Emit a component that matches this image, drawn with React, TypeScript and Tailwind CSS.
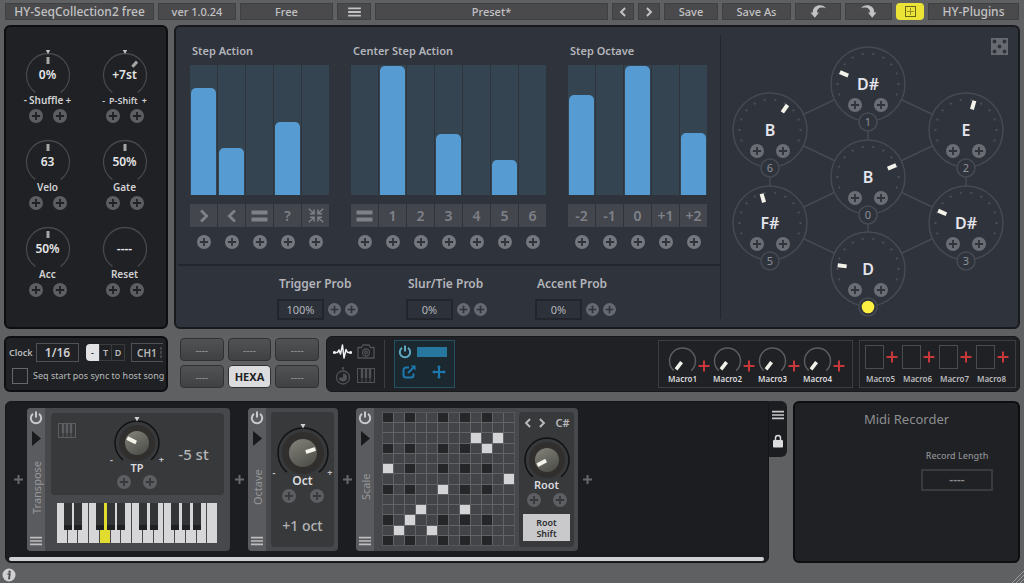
import { useState } from "react";
import type { ReactNode } from "react";

const polar = (cx: number, cy: number, r: number, deg: number) => {
  const a = (deg * Math.PI) / 180;
  return [cx + r * Math.sin(a), cy - r * Math.cos(a)];
};

const arc = (cx: number, cy: number, r: number, half: number) => {
  const [x1, y1] = polar(cx, cy, r, -half);
  const [x2, y2] = polar(cx, cy, r, half);
  return `M${x1} ${y1}A${r} ${r} 0 1 1 ${x2} ${y2}`;
};

/* ---------- small icons ---------- */

function PlusDot({ label, className = "text-[#5c5e61]", size = 14 }: { label: string; className?: string; size?: number }) {
  return (
    <button type="button" aria-label={label} className={`block shrink-0 ${className}`}>
      <svg width={size} height={size} viewBox="0 0 14 14" className="block">
        <path
          fill="currentColor"
          fillRule="evenodd"
          d="M7 0a7 7 0 1 1 0 14a7 7 0 0 1 0-14zM6.1 2.9v3.2H2.9v1.8h3.2v3.2h1.8V7.9h3.2V6.1H7.9V2.9z"
        />
      </svg>
    </button>
  );
}

function DotPair({ name, gap = "gap-[10px]", tone }: { name: string; gap?: string; tone?: string }) {
  return (
    <div className={`flex justify-center ${gap}`}>
      <PlusDot label={`${name} mod A`} className={tone} />
      <PlusDot label={`${name} mod B`} className={tone} />
    </div>
  );
}

function Cross({ className }: { className: string }) {
  return (
    <svg width="12" height="12" viewBox="0 0 12 12" className={className}>
      <path d="M6 0.5v11M0.5 6h11" stroke="currentColor" strokeWidth="2" />
    </svg>
  );
}

function MoveCross({ className }: { className: string }) {
  return (
    <svg width="14" height="14" viewBox="0 0 14 14" className={className}>
      <path d="M7 1.5v11M1.5 7h11" stroke="currentColor" strokeWidth="2" />
      <path d="M7 0l2 2.6H5zM7 14l2-2.6H5zM0 7l2.6-2v4zM14 7l-2.6-2v4z" fill="currentColor" />
    </svg>
  );
}

function Bars({ className = "", w = 14, h = 11 }: { className?: string; w?: number; h?: number }) {
  return (
    <svg width={w} height={h} viewBox="0 0 14 11" className={className}>
      <path d="M0 1.5h14M0 5.5h14M0 9.5h14" stroke="currentColor" strokeWidth="2" />
    </svg>
  );
}

function Power({ className }: { className: string }) {
  return (
    <svg width="14" height="14" viewBox="0 0 14 14" className={className}>
      <path d="M4 2.9a5.2 5.2 0 1 0 6 0M7 0.6v6" fill="none" stroke="currentColor" strokeWidth="2" />
    </svg>
  );
}

function Angle({ dir, className, size = 12 }: { dir: "left" | "right"; className?: string; size?: number }) {
  return (
    <svg width={size} height={size} viewBox="0 0 12 12" className={className}>
      <path d={dir === "left" ? "M8.5 1.2L3.7 6l4.8 4.8" : "M3.5 1.2L8.3 6l-4.8 4.8"} fill="none" stroke="currentColor" strokeWidth="2.4" />
    </svg>
  );
}

function PianoIcon({ className }: { className: string }) {
  return (
    <svg width="18" height="15" viewBox="0 0 18 15" className={className}>
      <rect x="0.5" y="0.5" width="17" height="14" fill="none" stroke="currentColor" />
      <path d="M5 0v10M9 0v10M13 0v10" stroke="currentColor" strokeWidth="2.4" />
      <path d="M5 10v5M9 10v5M13 10v5" stroke="currentColor" />
    </svg>
  );
}

function Undo({ flip = false }: { flip?: boolean }) {
  return (
    <svg width="17" height="13" viewBox="0 0 17 13" className="text-[#c2c2c4]">
      <path
        fill="currentColor"
        transform={flip ? "translate(17 0) scale(-1 1)" : undefined}
        d="M16.2 3.6C14.500 0.800 10.500 -0.400 7.200 0.800C3.900 2 2.700 4.600 2.800 7.400L0.500 7.400L4.800 12.800L9 7.400L7 7.400C6.900 4.200 9.500 2 12.800 2.500C14 2.600 15.200 2.900 16.200 3.600z"
      />
    </svg>
  );
}

/* ---------- top bar ---------- */

function TopButton({ w, label, children }: { w: string; label?: string; children: ReactNode }) {
  return (
    <button
      type="button"
      aria-label={label}
      className={`flex h-[17px] items-center justify-center whitespace-nowrap border border-[#3f4042] bg-[#4a4a4c] font-medium leading-none text-[#c2c2c4] ${w}`}
    >
      {children}
    </button>
  );
}

function TopBar() {
  return (
    <header className="flex gap-1 px-[5px] pt-[3px] text-[11px]">
      <TopButton w="w-[149px] text-[12px]">HY-SeqCollection2 free</TopButton>
      <TopButton w="w-[78px]">ver 1.0.24</TopButton>
      <TopButton w="w-[93px]">Free</TopButton>
      <TopButton w="w-[34px]" label="Menu">
        <Bars w={13} h={10} />
      </TopButton>
      <TopButton w="min-w-0 flex-1">Preset*</TopButton>
      <TopButton w="w-[22px]" label="Previous preset">
        <Angle dir="left" size={10} />
      </TopButton>
      <TopButton w="w-[22px]" label="Next preset">
        <Angle dir="right" size={10} />
      </TopButton>
      <TopButton w="w-[54px]">Save</TopButton>
      <TopButton w="w-[69px]">Save As</TopButton>
      <TopButton w="w-[46px]" label="Undo">
        <Undo />
      </TopButton>
      <TopButton w="w-[47px]" label="Redo">
        <Undo flip />
      </TopButton>
      <button type="button" aria-label="Grid view" className="flex h-[17px] w-[28px] items-center justify-center rounded-sm bg-[#ebe437]">
        <svg width="11" height="11" viewBox="0 0 11 11">
          <rect x="0.5" y="0.5" width="10" height="10" fill="none" stroke="#68651b" />
          <path d="M5.500 2v7M2 5.500h7" stroke="#97922a" />
        </svg>
      </button>
      <TopButton w="w-[91px] text-[12px]">HY-Plugins</TopButton>
    </header>
  );
}

/* ---------- left panel ---------- */

type RingKnobProps = { name: string; value: string; angle?: number; bipolar?: boolean; small?: boolean };

function RingKnob({ name, value, angle, bipolar, small }: RingKnobProps) {
  return (
    <div className="flex flex-col items-center">
      <div className="relative">
        <svg width="50" height="44" viewBox="0 0 50 44" className="block">
          <path d={arc(25, 26, 21.5, 144)} fill="none" stroke="#46484b" strokeWidth="1.3" />
          {bipolar && <path d="M22.800 1h4.400l-2.200 4z" fill="#c4c4c4" />}
          {angle !== undefined && (
            <rect x="23.500" y="8" width="3" height="7" fill="#a5a5a3" transform={`rotate(${angle} 25 26)`} />
          )}
        </svg>
        <span className="absolute inset-x-0 top-[18px] text-center text-[12px] font-semibold leading-4 text-[#e6e6e8]">{value}</span>
        <input
          type="range"
          aria-label={name}
          min={-144}
          max={144}
          defaultValue={angle ?? 0}
          className="absolute inset-0 h-full w-full cursor-pointer opacity-0"
        />
      </div>
      <div
        className={`flex h-[14px] items-center font-semibold leading-none text-[#d2d2d4] ${small ? "gap-1 text-[9px]" : "gap-[2px] text-[10px]"}`}
      >
        {bipolar && <span>-</span>}
        <span>{name}</span>
        {bipolar && <span>+</span>}
      </div>
      <div className="mt-[2px]">
        <DotPair name={name} />
      </div>
    </div>
  );
}

function GlobalPanel() {
  return (
    <section className="w-[164px] shrink-0 rounded-md border-2 border-[#0d0e10] bg-[#1f2124] px-[3px] pb-[30px] pt-[22px]">
      <div className="grid grid-cols-2 gap-y-[13px]">
        <RingKnob name="Shuffle" value="0%" angle={0} bipolar />
        <RingKnob name="P-Shift" value="+7st" angle={42} bipolar small />
        <RingKnob name="Velo" value="63" angle={0} />
        <RingKnob name="Gate" value="50%" angle={0} />
        <RingKnob name="Acc" value="50%" angle={0} />
        <RingKnob name="Reset" value="----" />
      </div>
    </section>
  );
}

/* ---------- step charts ---------- */

type Column = { key: string; face: ReactNode; value: number };

const EqualsIcon = (
  <svg width="17" height="12" viewBox="0 0 17 12">
    <path d="M0.500 2.500h16M0.500 9.500h16" stroke="currentColor" strokeWidth="4" />
  </svg>
);

const ShrinkIcon = (
  <svg width="16" height="15" viewBox="0 0 16 15" fill="none" stroke="currentColor" strokeWidth="1.500">
    <path d="M0.800 0.800L5.500 5.200M2 5.700h4V1.500M15.200 0.800L10.500 5.200M14 5.700h-4V1.500M0.800 14.200L5.500 9.800M2 9.300h4v4.200M15.200 14.200L10.500 9.800M14 9.300h-4v4.200" />
  </svg>
);

function Bar({ name, initial }: { name: string; initial: number }) {
  const [value, setValue] = useState(initial);
  return (
    <div className="relative flex h-[130px] w-[27px] items-end bg-[#344450] px-px">
      <div className="w-full rounded-t-[5px] bg-[#569bd1]" style={{ height: `${value}%` }} />
      <input
        type="range"
        aria-label={name}
        value={value}
        onChange={(e) => setValue(Number(e.target.value))}
        className="absolute inset-0 h-full w-full cursor-pointer opacity-0 [direction:rtl] [writing-mode:vertical-lr]"
      />
    </div>
  );
}

function StepChart({ title, columns }: { title: string; columns: Column[] }) {
  return (
    <div>
      <h2 className="h-4 pl-[2px] text-[11px] font-semibold leading-4 text-[#b3b5ba]">{title}</h2>
      <div className="mt-[6px] flex">
        {columns.map((c) => (
          <div key={c.key} className="mr-px flex flex-col items-center last:mr-0">
            <Bar name={`${title} ${c.key}`} initial={c.value} />
            <button
              type="button"
              aria-label={c.key}
              className="mt-[9px] flex h-[23px] w-[27px] items-center justify-center bg-[#43464d] text-[14px] font-semibold leading-none text-[#7e8188]"
            >
              {c.face}
            </button>
            <div className="mt-2">
              <PlusDot label={`Modulate ${c.key}`} className="text-[#74777d]" />
            </div>
          </div>
        ))}
      </div>
    </div>
  );
}

const stepAction: Column[] = [
  { key: "forward", face: <Angle dir="right" size={14} />, value: 82 },
  { key: "backward", face: <Angle dir="left" size={14} />, value: 36 },
  { key: "hold", face: EqualsIcon, value: 0 },
  { key: "random", face: "?", value: 56 },
  { key: "center", face: ShrinkIcon, value: 0 },
];

const centerAction: Column[] = [
  { key: "hold", face: EqualsIcon, value: 0 },
  { key: "1", face: "1", value: 99 },
  { key: "2", face: "2", value: 0 },
  { key: "3", face: "3", value: 47 },
  { key: "4", face: "4", value: 0 },
  { key: "5", face: "5", value: 27 },
  { key: "6", face: "6", value: 0 },
];

const stepOctave: Column[] = [
  { key: "-2", face: "-2", value: 77 },
  { key: "-1", face: "-1", value: 0 },
  { key: "0", face: "0", value: 99 },
  { key: "+1", face: "+1", value: 0 },
  { key: "+2", face: "+2", value: 48 },
];

function Prob({ id, title, value }: { id: string; title: string; value: string }) {
  return (
    <div className="w-[82px] whitespace-nowrap">
      <label htmlFor={id} className="block h-4 pl-[2px] text-[12px] font-semibold leading-4 text-[#b3b5ba]">
        {title}
      </label>
      <div className="mt-[7px] flex items-center gap-1">
        <input
          id={id}
          defaultValue={value}
          className="h-[21px] w-[47px] border-2 border-[#22252c] bg-[#2d3139] text-center text-[11px] text-[#b3b5ba]"
        />
        <PlusDot label={`${title} mod A`} className="text-[#666970]" size={13} />
        <PlusDot label={`${title} mod B`} className="text-[#666970]" size={13} />
      </div>
    </div>
  );
}

/* ---------- hexagon sequencer ---------- */

type HexNode = { id: string; note: string; angle: number; place: string; active?: boolean };

const hexNodes: HexNode[] = [
  { id: "1", note: "D#", angle: -67, place: "left-[109px] top-[19px]" },
  { id: "6", note: "B", angle: 35, place: "left-[11px] top-[65px]" },
  { id: "2", note: "E", angle: 16, place: "left-[207px] top-[65px]" },
  { id: "0", note: "B", angle: 67, place: "left-[109px] top-[112px]" },
  { id: "5", note: "F#", angle: -16, place: "left-[11px] top-[158px]" },
  { id: "3", note: "D#", angle: -66, place: "left-[207px] top-[158px]" },
  { id: "4", note: "D", angle: -83, place: "left-[109px] top-[204px]", active: true },
];

function HexKnob({ node }: { node: HexNode }) {
  const ticks = Array.from({ length: 12 }, (_, i) => -110 + i * 20);
  return (
    <div className={`absolute h-[88px] w-[76px] ${node.place}`}>
      <svg width="76" height="88" viewBox="0 0 76 88" className="absolute left-0 top-0">
        <circle cx="38" cy="38" r="37" fill="#2f333c" stroke="#464a52" strokeWidth="1.500" />
        {ticks.map((t) => (
          <rect key={t} x="37" y="6.500" width="2" height="2" fill="#4b4f58" transform={`rotate(${t} 38 38)`} />
        ))}
        <rect x="36" y="7.500" width="4" height="9" fill="#f3f3ea" transform={`rotate(${node.angle} 38 38)`} />
        <circle cx="38" cy="76" r="9" fill="#2f333c" stroke="#464a52" strokeWidth="1.500" />
        {node.active && <circle cx="38" cy="76" r="6.300" fill="#fdf043" />}
      </svg>
      <span className="absolute inset-x-0 top-[27px] text-center text-[16px] font-semibold leading-[22px] text-[#e4e4ec]">{node.note}</span>
      {!node.active && (
        <span className="absolute inset-x-0 top-[69px] text-center text-[11px] leading-[14px] text-[#8d9097]">{node.id}</span>
      )}
      <input
        type="range"
        aria-label={`Node ${node.id} note`}
        min={-120}
        max={120}
        defaultValue={node.angle}
        className="absolute left-0 top-0 h-[76px] w-full cursor-pointer opacity-0"
      />
      <div className="absolute inset-x-0 top-[52px]">
        <DotPair name={`Node ${node.id}`} gap="gap-3" tone="text-[#6a6d74]" />
      </div>
    </div>
  );
}

function HexPanel() {
  return (
    <div className="relative my-2 flex-1 border-l border-[#23262c]">
      <div className="relative -my-2 h-[298px] w-[297px]">
        <svg width="297" height="298" viewBox="0 0 297 298" className="absolute left-0 top-0">
          <path
            d="M147 57L245 103V196L147 242L49 196V103zM147 57V242M49 103L245 196M245 103L49 196"
            fill="none"
            stroke="#464a52"
            strokeWidth="1.500"
          />
        </svg>
        {hexNodes.map((n) => (
          <HexKnob key={n.id} node={n} />
        ))}
      </div>
      <button type="button" aria-label="Randomize" className="absolute right-[10px] top-[3px]">
        <svg width="17" height="17" viewBox="0 0 17 17" className="block">
          <rect width="17" height="17" fill="#676a70" />
          <g fill="#2f333c">
            <circle cx="3.500" cy="3.500" r="1.900" />
            <circle cx="13.500" cy="3.500" r="1.900" />
            <circle cx="8.500" cy="8.500" r="1.900" />
            <circle cx="3.500" cy="13.500" r="1.900" />
            <circle cx="13.500" cy="13.500" r="1.900" />
          </g>
        </svg>
      </button>
    </div>
  );
}

function SequencerPanel() {
  return (
    <section className="flex min-w-0 flex-1 rounded-md border-2 border-[#181a1e] bg-[#2f333c]">
      <div className="w-[544px] shrink-0">
        <div className="flex gap-[22px] pl-[14px] pt-4">
          <StepChart title="Step Action" columns={stepAction} />
          <StepChart title="Center Step Action" columns={centerAction} />
          <StepChart title="Step Octave" columns={stepOctave} />
        </div>
        <div className="ml-[2px] mt-[15px] h-[2px] bg-[#23262c]" />
        <div className="mt-[10px] flex gap-[47px] pl-[101px]">
          <Prob id="trigger" title="Trigger Prob" value="100%" />
          <Prob id="slur" title="Slur/Tie Prob" value="0%" />
          <Prob id="accent" title="Accent Prob" value="0%" />
        </div>
      </div>
      <HexPanel />
    </section>
  );
}

/* ---------- middle row ---------- */

function ClockPanel() {
  return (
    <section className="flex w-[164px] shrink-0 flex-col gap-[6px] rounded-md border-2 border-[#0d0e10] bg-[#1f2124] pl-[3px] pt-[5px] text-[10px] text-[#b9b9bb]">
      <div className="flex items-center">
        <label htmlFor="clock" className="w-[27px] text-[9px] font-semibold">
          Clock
        </label>
        <select
          id="clock"
          className="h-[19px] w-[43px] appearance-none border border-[#4f5154] bg-transparent text-center text-[12px] font-semibold leading-none text-[#cfcfd1]"
        >
          <option>1/16</option>
        </select>
        <div className="ml-[7px] flex h-[17px] text-[9px] font-semibold leading-none">
          <button type="button" className="w-[13px] rounded-l-sm bg-[#e2e2e4] text-[#333]">
            -
          </button>
          <button type="button" className="w-[13px] border border-[#3a3b3e]">
            T
          </button>
          <button type="button" className="w-[13px] border border-l-0 border-[#3a3b3e]">
            D
          </button>
        </div>
        <div className="relative ml-[6px]">
          <select
            aria-label="MIDI channel"
            className="block h-[19px] w-[32px] appearance-none border border-r-0 border-[#4f5154] bg-transparent pl-[5px] text-[10px] font-semibold leading-none"
          >
            <option>CH1</option>
          </select>
          <svg width="2" height="11" viewBox="0 0 2 11" className="absolute right-[1px] top-1">
            <path d="M1 0v3M1 4v3M1 8v3" stroke="#66686b" />
          </svg>
        </div>
      </div>
      <label className="flex items-center gap-[5px] whitespace-nowrap pl-[3px] text-[9px]">
        <input type="checkbox" className="h-4 w-4 appearance-none border border-[#66686b] checked:bg-[#b9b9bb]" />
        Seq start pos sync to host song
      </label>
    </section>
  );
}

function Pads() {
  const pads = ["----", "----", "----", "----", "HEXA", "----"];
  return (
    <div className="ml-3 mt-[2px] grid w-[139px] shrink-0 grid-cols-3 gap-1 self-start">
      {pads.map((p, i) => (
        <button
          key={i}
          type="button"
          className={
            p === "HEXA"
              ? "h-[23px] rounded-sm border border-[#303133] bg-[#dcdcde] text-[11px] font-bold leading-none text-[#222]"
              : "h-[23px] rounded-sm border border-[#303133] bg-linear-to-b from-[#515254] to-[#404143] text-[10px] leading-none text-[#97989a]"
          }
        >
          {p}
        </button>
      ))}
    </div>
  );
}

function ModTabs() {
  return (
    <div className="grid w-[58px] grid-cols-2 place-items-center border-r border-[#3b3d40] pl-1 pr-[6px]">
      <button type="button" aria-label="Modulation">
        <svg width="19" height="16" viewBox="0 0 19 16" fill="none" stroke="#efeff1" strokeWidth="1.500" strokeLinejoin="round">
          <path d="M1 8.500h3.500l1.500-2.500 1.500 4L9.500 1l1.500 13 2-8.500 1.500 3H18" />
          <circle cx="1.400" cy="8.500" r="0.800" />
          <circle cx="17.600" cy="8.500" r="0.800" />
        </svg>
      </button>
      <button type="button" aria-label="Snapshots">
        <svg width="18" height="15" viewBox="0 0 18 15" fill="none" stroke="#505255" strokeWidth="1.300">
          <path d="M1 3.500h3.500L6 1h6l1.500 2.500H17V14H1z" />
          <circle cx="9" cy="8.500" r="3.500" />
          <circle cx="9" cy="8.500" r="1.300" />
        </svg>
      </button>
      <button type="button" aria-label="Timing">
        <svg width="16" height="18" viewBox="0 0 16 18" fill="none" stroke="#505255" strokeWidth="1.300">
          <circle cx="8" cy="10.500" r="6.500" />
          <circle cx="8" cy="10.500" r="4" fill="#505255" stroke="none" />
          <path d="M8 10.500V6H3.500v4.500z" fill="#1f2124" stroke="none" />
          <path d="M7 1h2M8 1v2" />
        </svg>
      </button>
      <button type="button" aria-label="Keyboard">
        <PianoIcon className="block text-[#505255]" />
      </button>
    </div>
  );
}

function MacroKnob({ name }: { name: string }) {
  return (
    <div className="w-[45px]">
      <div className="flex items-end">
        <div className="relative ml-[9px]">
          <svg width="29" height="28" viewBox="0 0 29 28" className="block">
            <path d={arc(14.5, 15, 13, 138)} fill="none" stroke="#5a5c5f" strokeWidth="1.500" />
            <rect x="12.700" y="4.500" width="3.600" height="9" fill="#f1f1ea" transform="rotate(-142 14.500 15)" />
          </svg>
          <input type="range" aria-label={name} defaultValue={0} className="absolute inset-0 h-full w-full cursor-pointer opacity-0" />
        </div>
        <button type="button" aria-label={`Assign ${name}`} className="-mr-2 mb-[2px] ml-px">
          <Cross className="block text-[#c8373a]" />
        </button>
      </div>
      <div className="w-[47px] text-center text-[8px] font-semibold leading-[10px] text-[#dcdcde]">{name}</div>
    </div>
  );
}

function MacroSwitch({ name }: { name: string }) {
  return (
    <div className="w-[37px]">
      <div className="flex items-center gap-[2px] pl-[5px]">
        <button type="button" aria-label={name} className="h-6 w-[19px] shrink-0 border border-[#4a4c4f]" />
        <button type="button" aria-label={`Assign ${name}`} className="shrink-0">
          <Cross className="block text-[#c8373a]" />
        </button>
      </div>
      <div className="mt-[5px] pl-[6px] text-[8px] font-semibold leading-[10px] text-[#bcbcbe]">{name}</div>
    </div>
  );
}

function ModPanel() {
  return (
    <section className="ml-[7px] flex min-w-0 flex-1 rounded-md border border-[#17181a] bg-[#1f2124] py-[3px] pr-[3px]">
      <ModTabs />
      <div className="ml-[9px] flex h-[48px] w-[61px] flex-col gap-[6px] border border-[#24505f] bg-[#1c282f] pl-[3px] pt-1">
        <div className="flex items-center gap-[5px]">
          <button type="button" aria-label="Enable modulator">
            <Power className="block text-[#5fa6bf]" />
          </button>
          <div className="h-[10px] w-[30px] bg-[#27769d]" />
        </div>
        <div className="flex items-center gap-4 pl-1">
          <button type="button" aria-label="Open modulator">
            <svg width="14" height="14" viewBox="0 0 14 14" fill="none" stroke="#1d7ab0" strokeWidth="2" className="block">
              <path d="M7 2.500H4a2.500 2.500 0 0 0-2.500 2.500v5A2.500 2.500 0 0 0 4 12.500h5a2.500 2.500 0 0 0 2.500-2.500V8.500M6 8l5-5" />
              <path d="M8.500 0.500H13.500V5.500z" fill="#1d7ab0" stroke="none" />
            </svg>
          </button>
          <button type="button" aria-label="Assign modulator">
            <MoveCross className="block text-[#1d7ab0]" />
          </button>
        </div>
      </div>
      <div className="ml-auto flex h-[48px] w-[195px] border border-[#3b3d40] pt-[5px]">
        {["Macro1", "Macro2", "Macro3", "Macro4"].map((m) => (
          <MacroKnob key={m} name={m} />
        ))}
      </div>
      <div className="ml-[6px] flex h-[48px] w-[157px] border border-[#3b3d40] pt-1">
        {["Macro5", "Macro6", "Macro7", "Macro8"].map((m) => (
          <MacroSwitch key={m} name={m} />
        ))}
      </div>
    </section>
  );
}

/* ---------- module rack ---------- */

function Dial({ name, r, inner, angle, bipolar }: { name: string; r: number; inner: number; angle: number; bipolar?: boolean }) {
  const w = r * 2 + 10;
  const c = w / 2;
  const cy = r + 4;
  const h = Math.round(cy + r * 0.82);
  return (
    <div className="relative">
      <svg width={w} height={h} viewBox={`0 0 ${w} ${h}`} className="block">
        <defs>
          <linearGradient id={`face-${name}`} x1="0" y1="0" x2="0.6" y2="1">
            <stop offset="0" stopColor="#84847c" />
            <stop offset="1" stopColor="#52524d" />
          </linearGradient>
        </defs>
        <circle cx={c} cy={cy} r={r - 4} fill="#302f2d" />
        <path d={arc(c, cy, r, 140)} fill="none" stroke="#111213" strokeWidth="1.500" />
        <circle cx={c} cy={cy} r={inner} fill={`url(#face-${name})`} />
        <rect x={c - 2} y={cy - inner + 1} width="4" height="10" rx="0.500" fill="#f3f3ea" transform={`rotate(${angle} ${c} ${cy})`} />
        {bipolar && <path d={`M${c - 2.500} 0h5l-2.500 4.500z`} fill="#cfcfcf" />}
      </svg>
      {bipolar && (
        <>
          <span className="absolute -bottom-1 left-0 text-[9px] font-bold leading-[10px] text-[#c4c4c6]">-</span>
          <span className="absolute -bottom-1 right-0 text-[9px] font-bold leading-[10px] text-[#c4c4c6]">+</span>
        </>
      )}
      <input
        type="range"
        aria-label={name}
        min={-140}
        max={140}
        defaultValue={angle}
        className="absolute inset-0 h-full w-full cursor-pointer opacity-0"
      />
    </div>
  );
}

function Module({ name, w, children }: { name: string; w: string; children: ReactNode }) {
  return (
    <article className={`flex h-[143px] shrink-0 overflow-hidden rounded-sm bg-[#47484b] ${w}`}>
      <div className="flex w-[18px] shrink-0 flex-col items-center bg-[#5a5b5e] pb-[5px] pt-[3px]">
        <button type="button" aria-label={`${name} power`}>
          <Power className="block text-[#c9c9cb]" />
        </button>
        <button type="button" aria-label={`Collapse ${name}`} className="mt-[6px]">
          <svg width="9" height="15" viewBox="0 0 9 15" className="block">
            <path d="M0 0l9 7.500L0 15z" fill="#191a1c" />
          </svg>
        </button>
        <h3 className="flex flex-1 rotate-180 items-center justify-center pt-2 text-[11px] leading-none text-[#97989b] [writing-mode:vertical-rl]">
          {name}
        </h3>
        <button type="button" aria-label={`${name} menu`}>
          <Bars className="block text-[#bdbdbf]" w={12} h={10} />
        </button>
      </div>
      {children}
    </article>
  );
}

function AddSlot() {
  return (
    <button type="button" aria-label="Add module" className="flex w-[18px] shrink-0 items-center justify-center">
      <svg width="9" height="9" viewBox="0 0 9 9">
        <path d="M4.500 0v9M0 4.500h9" stroke="#66686b" strokeWidth="2" />
      </svg>
    </button>
  );
}

function Keyboard() {
  const sharps = [0, 1, 3, 4, 5, 7, 8, 10, 11, 12];
  return (
    <div className="mx-[6px] mt-2 flex h-10">
      {Array.from({ length: 15 }, (_, i) => (
        <div key={i} className="relative flex-1">
          <button
            type="button"
            aria-label={`Key ${i + 1}`}
            className={`block h-full w-full border-r border-[#47484b] ${i === 4 ? "bg-[#e2dc2f]" : "bg-[#d6d6d8]"}`}
          />
          {sharps.includes(i) && (
            <button
              type="button"
              aria-label={`Sharp ${i + 1}`}
              className="absolute -right-1 top-0 z-10 h-[27px] w-2 border-b-[5px] border-[#1f2022] bg-[#333436]"
            />
          )}
        </div>
      ))}
    </div>
  );
}

const scaleRows = [
  "#.#..#.#.#..",
  "............",
  "........O.O.",
  "#.#..#.#.O..",
  "............",
  "O.#..#.#.#..",
  "...........O",
  "#.#..O.#.#..",
  "............",
  "...O...O....",
  "#.O..#.#.#..",
  ".O..O.......",
  "#.#..#.#.#..",
];

function ScaleGrid() {
  return (
    <div className="ml-2 mt-1 grid h-[134px] w-[133px] shrink-0 grid-cols-12 grid-rows-13 gap-px border border-[#56575a] bg-[#636467]">
      {scaleRows.flatMap((row, y) =>
        row.split("").map((c, x) => (
          <button
            key={`${x}-${y}`}
            type="button"
            aria-label={`Row ${y + 1}, column ${x + 1}`}
            aria-pressed={c === "O"}
            className={c === "O" ? "bg-[#d4d4d6]" : c === "#" ? "bg-[#252628]" : "bg-[#434447]"}
          />
        )),
      )}
    </div>
  );
}

function Rack() {
  return (
    <section className="flex min-w-0 flex-1">
      <div className="flex h-[162px] min-w-0 flex-1 flex-col rounded-md rounded-tr-none border border-[#141517] bg-[#1c1d20] pl-[3px] pr-1 pt-[6px]">
        <div className="flex min-w-0">
          <AddSlot />
          <Module name="Transpose" w="w-[203px]">
            <div className="flex-1 px-[6px] pt-[5px]">
              <div className="grid h-[82px] grid-cols-[60px_52px_1fr] rounded-sm bg-[#38393b]">
                <PianoIcon className="ml-[7px] mt-[10px] text-[#5d5e61]" />
                <div className="flex flex-col items-center pt-1">
                  <Dial name="TP" r={22} inner={12} angle={-63} bipolar />
                  <div className="h-[14px] text-[11px] font-semibold leading-[14px] text-[#dcdcde]">TP</div>
                  <DotPair name="TP" gap="gap-3" />
                </div>
                <div className="self-center text-center text-[15px] font-medium text-[#b4b4b6]">-5 st</div>
              </div>
              <Keyboard />
            </div>
          </Module>
          <AddSlot />
          <Module name="Octave" w="w-[90px]">
            <div className="my-1 ml-[5px] mr-1 flex flex-1 flex-col items-center rounded-sm bg-[#38393b] pt-3">
              <Dial name="Oct" r={25} inner={14} angle={72} bipolar />
              <div className="h-[14px] text-[12px] font-semibold leading-[14px] text-[#dcdcde]">Oct</div>
              <div className="mt-px">
                <DotPair name="Oct" gap="gap-[14px]" />
              </div>
              <div className="mt-[14px] text-[14px] font-medium leading-[18px] text-[#b4b4b6]">+1 oct</div>
            </div>
          </Module>
          <AddSlot />
          <Module name="Scale" w="w-[222px]">
            <ScaleGrid />
            <div className="my-1 ml-1 mr-1 flex flex-1 flex-col items-center rounded-sm bg-[#38393b] pt-1">
              <div className="flex h-[14px] items-center gap-1 text-[11px] font-semibold leading-[14px] text-[#b9b9bb]">
                <button type="button" aria-label="Previous root">
                  <Angle dir="left" size={10} className="block" />
                </button>
                <button type="button" aria-label="Next root">
                  <Angle dir="right" size={10} className="block" />
                </button>
                <span className="pl-1">C#</span>
              </div>
              <div className="mt-1">
                <Dial name="Root" r={22} inner={12} angle={-118} />
              </div>
              <div className="h-[14px] text-[11px] font-semibold leading-[14px] text-[#dcdcde]">Root</div>
              <div className="mt-px">
                <DotPair name="Root" gap="gap-3" />
              </div>
              <button type="button" className="mt-[7px] h-[27px] w-[47px] bg-[#c9c9cb] text-[9px] font-semibold leading-[11px] text-[#2c2d2f]">
                Root
                <br />
                Shift
              </button>
            </div>
          </Module>
          <AddSlot />
        </div>
        <div className="mt-[6px] h-1 rounded-full bg-[#d0d1d3]" />
      </div>
      <div className="flex h-[56px] w-[18px] shrink-0 flex-col items-center gap-[14px] rounded-r-md bg-[#1c1d20] pt-[9px]">
        <button type="button" aria-label="Rack menu">
          <Bars className="block text-[#c9c9cb]" w={12} h={10} />
        </button>
        <button type="button" aria-label="Lock rack">
          <svg width="10" height="14" viewBox="0 0 10 14" className="block">
            <path d="M2.500 7V4a2.500 2.500 0 0 1 5 0v3" fill="none" stroke="#dcdcde" strokeWidth="1.500" />
            <rect y="6" width="10" height="7.500" rx="1" fill="#dcdcde" />
          </svg>
        </button>
      </div>
    </section>
  );
}

function MidiRecorder() {
  return (
    <section className="flex h-[162px] w-[227px] shrink-0 flex-col rounded-md border-2 border-[#0d0e10] bg-[#1f2124] pt-[6px] text-[#8d8e91]">
      <h2 className="text-center text-[13px] leading-5">Midi Recorder</h2>
      <div className="mr-[25px] mt-5 flex w-[72px] flex-col items-center gap-[6px] self-end">
        <label htmlFor="record-length" className="whitespace-nowrap text-[9px] font-medium leading-[14px]">
          Record Length
        </label>
        <select
          id="record-length"
          className="h-[22px] w-full appearance-none border-2 border-[#3a3b3e] bg-transparent text-center text-[12px] font-semibold leading-none"
        >
          <option>----</option>
        </select>
      </div>
    </section>
  );
}

export default function App() {
  return (
    <div className="flex min-h-screen flex-col bg-[#5f6062] font-['Noto_Sans',sans-serif] [&_button]:cursor-pointer">
      <TopBar />
      <main>
        <div className="mt-[5px] flex gap-[6px] px-1">
          <GlobalPanel />
          <SequencerPanel />
        </div>
        <div className="mt-[7px] flex h-[56px] px-1">
          <ClockPanel />
          <Pads />
          <ModPanel />
        </div>
        <div className="mt-[9px] flex gap-[6px] pl-[5px] pr-1">
          <Rack />
          <MidiRecorder />
        </div>
      </main>
      <footer className="flex flex-1 items-end justify-between pl-[2px] pt-1">
        <button type="button" aria-label="Info" className="mb-[1px]">
          <svg width="14" height="14" viewBox="0 0 14 14" className="block">
            <circle cx="7" cy="7" r="6.500" fill="#d0d0d2" />
            <circle cx="7.600" cy="3.700" r="1.200" fill="#4a4b4d" />
            <path d="M5.500 6h2.300L7 10.500h1.200" fill="none" stroke="#4a4b4d" strokeWidth="1.700" />
          </svg>
        </button>
        <svg width="13" height="13" viewBox="0 0 13 13" className="block">
          <path d="M1 13L13 1M5 13l8-8M9 13l4-4" stroke="#9a9b9d" />
        </svg>
      </footer>
    </div>
  );
}
